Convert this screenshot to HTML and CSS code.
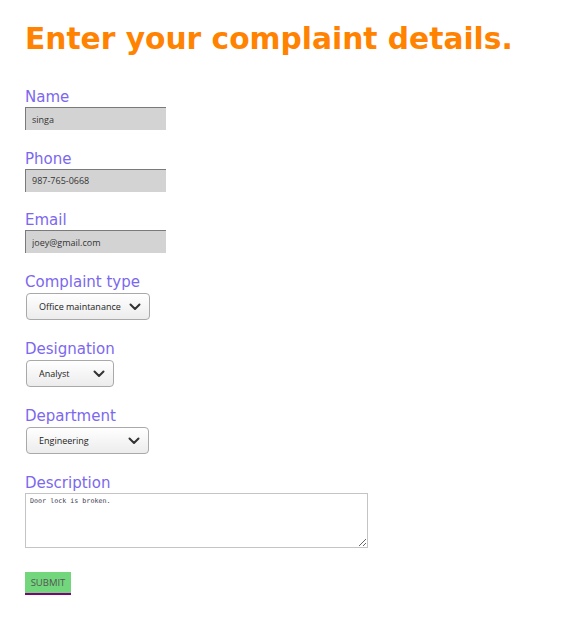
FILE: index.html
```html
<!DOCTYPE html>
<html lang="en">
<head>
<meta charset="utf-8">
<title>Complaint</title>
<link rel="stylesheet" href="styles.css">
</head>
<body>
<div class="page">
  <h1 class="title">Enter your complaint details.</h1>
  <form class="form">
    <div class="field">
      <label class="label">Name</label>
      <input class="text" type="text" value="singa">
    </div>
    <div class="field">
      <label class="label">Phone</label>
      <input class="text" type="text" value="987-765-0668">
    </div>
    <div class="field">
      <label class="label">Email</label>
      <input class="text" type="text" value="joey@gmail.com">
    </div>
    <div class="field field-select">
      <label class="label">Complaint type</label>
      <div class="select-wrap w-type">
        <select class="select"><option>Office maintanance</option></select>
        <svg class="chev" viewBox="0 0 12 8" width="12" height="8"><path d="M1.5 1.5 L6 6 L10.5 1.5" fill="none" stroke="#333" stroke-width="2" stroke-linecap="round" stroke-linejoin="round"/></svg>
      </div>
    </div>
    <div class="field field-select">
      <label class="label">Designation</label>
      <div class="select-wrap w-desig">
        <select class="select"><option>Analyst</option></select>
        <svg class="chev" viewBox="0 0 12 8" width="12" height="8"><path d="M1.5 1.5 L6 6 L10.5 1.5" fill="none" stroke="#333" stroke-width="2" stroke-linecap="round" stroke-linejoin="round"/></svg>
      </div>
    </div>
    <div class="field field-select">
      <label class="label">Department</label>
      <div class="select-wrap w-dept">
        <select class="select"><option>Engineering</option></select>
        <svg class="chev" viewBox="0 0 12 8" width="12" height="8"><path d="M1.5 1.5 L6 6 L10.5 1.5" fill="none" stroke="#333" stroke-width="2" stroke-linecap="round" stroke-linejoin="round"/></svg>
      </div>
    </div>
    <div class="field field-area">
      <label class="label">Description</label>
      <textarea class="area">Door lock is broken.</textarea>
    </div>
    <div class="actions">
      <button class="submit" type="button">SUBMIT</button>
    </div>
  </form>
</div>
</body>
</html>
```
FILE: styles.css
```css
html, body {
  margin: 0;
  padding: 0;
  background: #ffffff;
}
.page {
  padding: 21px 0 0 25px;
  font-family: "DejaVu Sans", sans-serif;
}
.title {
  margin: 0 0 31px 0;
  font-family: "DejaVu Sans", sans-serif;
  font-weight: bold;
  font-size: 29.7px;
  color: #ff8300;
  line-height: 35px;
}
.form {
  display: flex;
  flex-direction: column;
  align-items: flex-start;
}
.field {
  display: flex;
  flex-direction: column;
  align-items: flex-start;
  margin-bottom: 18.5px;
}
.label {
  font-family: "DejaVu Sans", sans-serif;
  font-size: 15px;
  line-height: 20px;
  color: #7b68ee;
}
.text {
  box-sizing: border-box;
  width: 141px;
  height: 23px;
  margin: 0;
  padding: 0 0 0 6px;
  border: none;
  border-top: 1px solid #7a7a7a;
  border-left: 1px solid #7a7a7a;
  background: #d3d3d3;
  font-family: "Open Sans", sans-serif;
  font-size: 9px;
  color: #333;
  outline: none;
}
.field-select .label {
  margin-bottom: 1.5px;
}
.select-wrap {
  position: relative;
  margin-left: 1px;
  height: 27px;
}
.w-type { width: 124px; }
.w-desig { width: 88px; }
.w-dept { width: 123px; }
.select {
  appearance: none;
  -webkit-appearance: none;
  box-sizing: border-box;
  width: 100%;
  height: 27px;
  margin: 0;
  padding: 0 0 0 12px;
  border: 1px solid #a9a9a9;
  border-radius: 4px;
  background: linear-gradient(#ffffff, #ececec);
  font-family: "Open Sans", sans-serif;
  font-size: 9px;
  color: #222;
  outline: none;
}
.chev {
  position: absolute;
  right: 9px;
  top: 10px;
  pointer-events: none;
}
.field-area {
  margin-bottom: 0;
}
.area {
  box-sizing: border-box;
  width: 343px;
  height: 55px;
  margin: 0;
  padding: 3px 4px;
  border: 1px solid #c4c4c4;
  font-family: "DejaVu Sans Mono", monospace;
  font-size: 6.7px;
  color: #445;
  outline: none;
}
.actions {
  margin-top: 23.5px;
}
.submit {
  box-sizing: border-box;
  width: 46px;
  height: 23px;
  margin: 0;
  padding: 0;
  border: none;
  border-bottom: 2px solid #800080;
  background: #72d67c;
  font-family: "Open Sans", sans-serif;
  font-size: 9.5px;
  color: #555;
}
```
